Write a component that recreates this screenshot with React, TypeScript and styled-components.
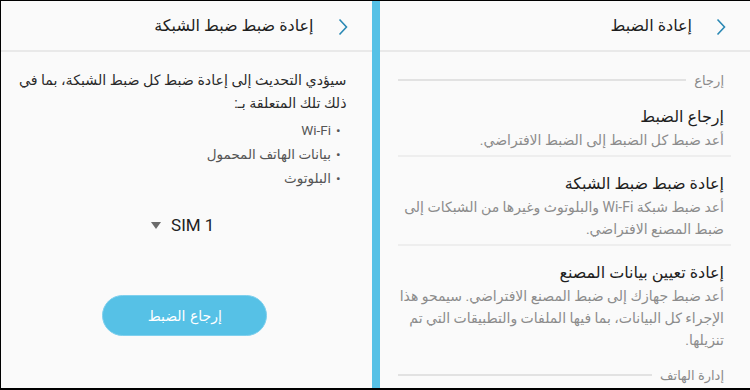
import { FC, ReactElement } from 'react';
import styled, { createGlobalStyle } from 'styled-components';

const GlobalStyle = createGlobalStyle`
    html, body {
        margin: 0;
        padding: 0;
        background: #fafafa;
    }
    * {
        box-sizing: border-box;
    }
`;

const bullets = ['Wi-Fi', 'بيانات الهاتف المحمول', 'البلوتوث'];

const items = [
    { title: 'إرجاع الضبط', desc: 'أعد ضبط كل الضبط إلى الضبط الافتراضي.' },
    { title: 'إعادة ضبط ضبط الشبكة', desc: 'أعد ضبط شبكة Wi-Fi والبلوتوث وغيرها من الشبكات إلى ضبط المصنع الافتراضي.' },
    {
        title: 'إعادة تعيين بيانات المصنع',
        desc: 'أعد ضبط جهازك إلى ضبط المصنع الافتراضي. سيمحو هذا الإجراء كل البيانات، بما فيها الملفات والتطبيقات التي تم تنزيلها.'
    }
];

const Chevron: FC = (): ReactElement => (
    <svg width="10" height="18" viewBox="0 0 10 18">
        <path d="M1.5 1.5 L8.5 9 L1.5 16.5" fill="none" stroke="#2a88b4" strokeWidth="1.6" />
    </svg>
);

const App: FC = (): ReactElement => {
    return (
        <>
            <GlobalStyle />
            <Screen>
                <Panel>
                    <Header>
                        <Back>
                            <Chevron />
                        </Back>
                        <Title>إعادة ضبط ضبط الشبكة</Title>
                    </Header>
                    <Body>
                        <Intro>سيؤدي التحديث إلى إعادة ضبط كل ضبط الشبكة، بما في ذلك تلك المتعلقة بـ:</Intro>
                        <List>
                            {bullets.map((b) => (
                                <Bullet key={b}>{b}</Bullet>
                            ))}
                        </List>
                        <Sim>
                            <Caret />
                            <span>SIM 1</span>
                        </Sim>
                        <ResetBtn>إرجاع الضبط</ResetBtn>
                    </Body>
                </Panel>
                <Split />
                <Panel>
                    <Header>
                        <Back>
                            <Chevron />
                        </Back>
                        <Title>إعادة الضبط</Title>
                    </Header>
                    <Menu>
                        <Section>
                            <span>إرجاع</span>
                        </Section>
                        {items.map((item, i) => (
                            <Item key={item.title} last={i === items.length - 1}>
                                <ItemTitle>{item.title}</ItemTitle>
                                <ItemDesc>{item.desc}</ItemDesc>
                            </Item>
                        ))}
                        <Section>
                            <span>إدارة الهاتف</span>
                        </Section>
                    </Menu>
                </Panel>
            </Screen>
        </>
    );
};

const Screen = styled.div`
    width: 750px;
    height: 390px;
    display: flex;
    background: #fafafa;
    border-left: 1px solid #000;
    border-top: 1px solid #000;
    border-bottom: 2px solid #000;
    overflow: hidden;
    font-family: Roboto, 'DejaVu Sans', sans-serif;
`;
const Panel = styled.div`
    flex: 1;
    display: flex;
    flex-direction: column;
    direction: rtl;
    min-width: 0;
`;
const Split = styled.div`
    width: 8px;
    background: #56c1e6;
    flex-shrink: 0;
`;
const Header = styled.header`
    height: 51px;
    flex-shrink: 0;
    display: flex;
    align-items: center;
    padding-right: 24px;
    border-bottom: 2px solid #e9e9e9;
`;
const Back = styled.div`
    display: flex;
    align-items: center;
    margin-left: 24px;
    margin-top: 2px;
`;
const Title = styled.div`
    font-size: 16px;
    font-weight: 500;
    color: #1e1e1e;
`;
const Body = styled.div`
    flex: 1;
    padding: 17px 25px 0 6px;
    display: flex;
    flex-direction: column;
`;
const Intro = styled.p`
    margin: 0;
    font-size: 14.2px;
    line-height: 23px;
    color: #2a2a2a;
`;
const List = styled.ul`
    margin: 3px 0 0;
    padding: 0 6px 0 0;
    list-style: none;
`;
const Bullet = styled.li`
    font-size: 13.5px;
    line-height: 24px;
    color: #555;
    &::before {
        content: '•';
        margin-left: 5px;
    }
`;
const Sim = styled.div`
    direction: ltr;
    margin-top: 25px;
    align-self: center;
    display: flex;
    align-items: center;
    gap: 10px;
    font-size: 17px;
    color: #222;
    margin-left: 12px;
`;
const Caret = styled.span`
    width: 0;
    height: 0;
    border-left: 5px solid transparent;
    border-right: 5px solid transparent;
    border-top: 7px solid #6b6b6b;
`;
const ResetBtn = styled.button`
    margin-top: 60px;
    align-self: center;
    margin-left: 16px;
    width: 165px;
    height: 41px;
    border-radius: 21px;
    border: 1px solid #7fd0ee;
    background: #56c1e6;
    color: #fff;
    font-family: 'DejaVu Sans', sans-serif;
    font-size: 14px;
`;
const Menu = styled.div`
    flex: 1;
    padding: 18px 19px 0 18px;
`;
const Section = styled.div`
    display: flex;
    align-items: center;
    gap: 8px;
    padding-right: 7px;
    font-size: 13px;
    color: #8a8a8a;
    height: 20px;
    &::after {
        content: '';
        flex: 1;
        height: 2px;
        background: #e2e2e2;
    }
`;
const Item = styled.div<{ last?: boolean }>`
    padding: 15px 7px 4px 0;
    margin-bottom: ${(p) => (p.last ? '10px' : '0')};
    border-bottom: ${(p) => (p.last ? 'none' : '2px solid #eeeeee')};
`;
const ItemTitle = styled.div`
    font-size: 16px;
    line-height: 24px;
    color: #1e1e1e;
`;
const ItemDesc = styled.div`
    font-size: 14px;
    line-height: 22px;
    color: #8c8c8c;
`;

export default App;
